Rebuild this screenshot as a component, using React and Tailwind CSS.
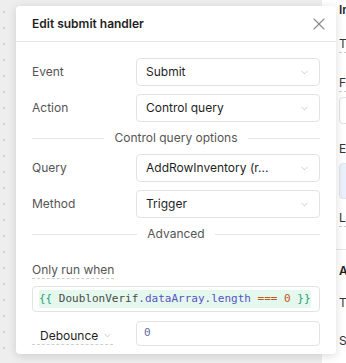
import { ChevronDown, X } from "lucide-react";

function Select({ value }) {
  return (
    <div className="flex-1 h-[28px] border border-[#e2e2e2] rounded-[4px] bg-white flex items-center pl-[9px] pr-[9px]">
      <span className="flex-1 text-[12px] text-[#1f1f1f] truncate">{value}</span>
      <ChevronDown size={11} strokeWidth={1.5} className="text-[#b8b8b8]" />
    </div>
  );
}

function Row({ label, value }) {
  return (
    <div className="flex items-center">
      <span className="w-[104px] text-[12px] text-[#555]">{label}</span>
      <Select value={value} />
    </div>
  );
}

function Divider({ label }) {
  return (
    <div className="h-[32px] flex items-center gap-[10px]">
      <div className="flex-1 h-px bg-[#e6e6e6]" />
      <span className="text-[12px] text-[#555]">{label}</span>
      <div className="flex-1 h-px bg-[#e6e6e6]" />
    </div>
  );
}

export default function App() {
  return (
    <div className="w-[346px] h-[363px] flex relative overflow-hidden font-['Inter',sans-serif]">
      <div className="w-[322px] h-full bg-[#eeeeee] bg-[radial-gradient(circle,#d2d2d2_1px,transparent_1.2px)] bg-[size:16px_16px] bg-[position:-4px_4px]" />
      <div className="flex-1 h-full bg-white pl-[17px] text-[12px] text-[#333] whitespace-nowrap overflow-hidden flex flex-col items-start">
        <div className="h-[20px] flex items-center font-semibold text-[#1f1f1f]">Inspect</div>
        <div className="mt-[16px] border-b border-dashed border-[#ccc] leading-[16px]">Type</div>
        <div className="mt-[22px] border-b border-dashed border-[#ccc] leading-[16px]">Form</div>
        <div className="mt-[5px] h-[27px] w-[40px] border border-[#e2e2e2] rounded-[4px]" />
        <div className="mt-[17px] leading-[16px]">Events</div>
        <div className="mt-[6px] h-[36px] w-[40px] border border-[#dfe3ea] bg-[#eaf1fd] rounded-[4px]" />
        <div className="mt-[11px] border-b border-dashed border-[#ccc] leading-[16px]">Label</div>
        <div className="mt-[22px] -ml-[17px] h-px w-[40px] bg-[#e6e6e6]" />
        <div className="mt-[13px] font-semibold text-[#1f1f1f] leading-[16px]">Appearance</div>
        <div className="mt-[16px] leading-[16px]">Tooltip</div>
        <div className="mt-[22px] leading-[16px]">Show</div>
      </div>

      <div className="absolute left-[16px] top-[6px] w-[320px] h-[348px] bg-white rounded-[4px] shadow-[0_2px_10px_rgba(0,0,0,0.14)]">
        <div className="h-[36px] border-b border-[#e6e6e6] flex items-center justify-between pl-[16px] pr-[7px]">
          <span className="text-[12px] font-semibold text-[#1f1f1f]">Edit submit handler</span>
          <X size={20} strokeWidth={1.4} className="text-[#8c8c8c]" />
        </div>
        <div className="px-[16px] pt-[16px]">
          <div className="flex flex-col gap-[8px]">
            <Row label="Event" value="Submit" />
            <Row label="Action" value="Control query" />
          </div>
          <Divider label="Control query options" />
          <div className="flex flex-col gap-[8px]">
            <Row label="Query" value="AddRowInventory (r..." />
            <Row label="Method" value="Trigger" />
          </div>
          <Divider label="Advanced" />
          <div className="mt-[6px]">
            <span className="text-[12px] text-[#555] leading-[16px] border-b border-dashed border-[#cfcfcf] pb-px">Only run when</span>
          </div>
          <div className="mt-[6px] h-[26px] border border-[#e2e2e2] rounded-[4px] flex items-center px-[6px]">
            <div className="bg-[#e4f8ed] rounded-[2px] h-[18px] flex items-center font-['DejaVu_Sans_Mono',monospace] text-[11px] whitespace-nowrap">
              <span className="text-[#2f9e7a]">{"{{"}</span>
              <span className="text-[#4a4a4a]">&nbsp;DoublonVerif</span>
              <span className="text-[#5a52c8]">.dataArray.length</span>
              <span className="text-[#c2571b]">&nbsp;===&nbsp;0</span>
              <span className="text-[#2f9e7a]">&nbsp;{"}}"}</span>
            </div>
          </div>
          <div className="mt-[9px] flex items-center">
            <div className="w-[104px]">
              <span className="inline-flex items-center gap-[4px] pl-[8px] border-b border-dashed border-[#cfcfcf] text-[12px] text-[#1f1f1f] leading-[16px]">
                Debounce
                <ChevronDown size={11} strokeWidth={1.5} className="text-[#b8b8b8]" />
              </span>
            </div>
            <div className="flex-1 h-[25px] border border-[#e2e2e2] rounded-[4px] flex items-center px-[7px] font-['DejaVu_Sans_Mono',monospace] text-[11px] text-[#5e6a9a]">
              0
            </div>
          </div>
        </div>
      </div>
    </div>
  );
}
